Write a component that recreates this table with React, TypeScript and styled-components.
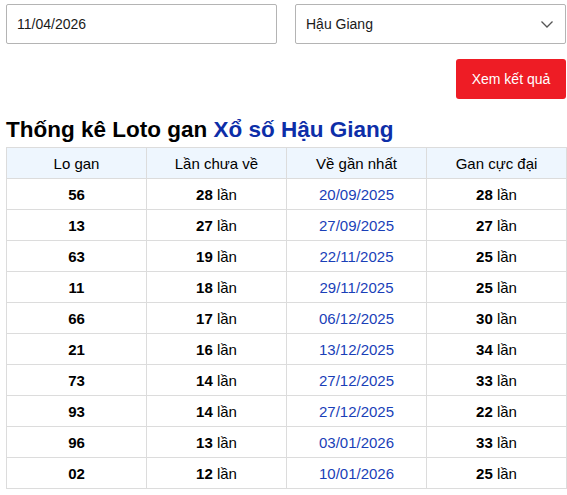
import styled, { createGlobalStyle } from "styled-components";

const GlobalStyle = createGlobalStyle`
  body {
    margin: 0;
    font-family: "Liberation Sans", Arial, sans-serif;
    background: #fff;
    color: #000;
  }
`;

const rows = [
  { num: "56", miss: 28, last: "20/09/2025", max: 28 },
  { num: "13", miss: 27, last: "27/09/2025", max: 27 },
  { num: "63", miss: 19, last: "22/11/2025", max: 25 },
  { num: "11", miss: 18, last: "29/11/2025", max: 25 },
  { num: "66", miss: 17, last: "06/12/2025", max: 30 },
  { num: "21", miss: 16, last: "13/12/2025", max: 34 },
  { num: "73", miss: 14, last: "27/12/2025", max: 33 },
  { num: "93", miss: 14, last: "27/12/2025", max: 22 },
  { num: "96", miss: 13, last: "03/01/2026", max: 33 },
  { num: "02", miss: 12, last: "10/01/2026", max: 25 },
];

export default function App() {
  return (
    <>
      <GlobalStyle />
      <Page>
        <Filters>
          <Field>11/04/2026</Field>
          <Field>
            Hậu Giang
            <svg width="14" height="14" viewBox="0 0 14 14">
              <path d="M1.5 4.5 L7 10 L12.5 4.5" fill="none" stroke="#555" strokeWidth="1.3" />
            </svg>
          </Field>
        </Filters>
        <Actions>
          <SubmitButton>Xem kết quả</SubmitButton>
        </Actions>
        <Title>
          Thống kê Loto gan <span>Xổ số Hậu Giang</span>
        </Title>
        <Table>
          <thead>
            <tr>
              <th>Lo gan</th>
              <th>Lần chưa về</th>
              <th>Về gần nhất</th>
              <th>Gan cực đại</th>
            </tr>
          </thead>
          <tbody>
            {rows.map((r) => (
              <tr key={r.num}>
                <td>
                  <b>{r.num}</b>
                </td>
                <td>
                  <b>{r.miss}</b> lần
                </td>
                <DateCell>{r.last}</DateCell>
                <td>
                  <b>{r.max}</b> lần
                </td>
              </tr>
            ))}
          </tbody>
        </Table>
      </Page>
    </>
  );
}

const Page = styled.div`
  width: 560px;
  padding: 4px 0 0 6px;
`;

const Filters = styled.div`
  display: grid;
  grid-template-columns: 1fr 1fr;
  gap: 18px;
`;

const Field = styled.div`
  height: 40px;
  box-sizing: border-box;
  border: 1px solid #b4b4b4;
  border-radius: 2px;
  display: flex;
  align-items: center;
  justify-content: space-between;
  padding: 0 10px;
  font-size: 14px;
  color: #1a1a1a;

  svg {
    margin-right: 1px;
  }
`;

const Actions = styled.div`
  display: flex;
  justify-content: flex-end;
  margin-top: 15px;
`;

const SubmitButton = styled.button`
  width: 110px;
  height: 40px;
  border: none;
  border-radius: 3px;
  background: #ee1c25;
  color: #fff;
  font-family: "Liberation Sans", Arial, sans-serif;
  font-size: 14px;
  cursor: pointer;
`;

const Title = styled.h2`
  margin: 18px 0 4px;
  font-size: 22.5px;
  font-weight: bold;
  line-height: 26px;

  span {
    color: #0d2ea8;
  }
`;

const Table = styled.table`
  width: 561px;
  border-collapse: collapse;
  font-size: 15px;
  table-layout: fixed;

  th,
  td {
    border: 1px solid #dcdcdc;
    height: 30px;
    padding: 0;
    text-align: center;
    font-weight: normal;
  }

  th {
    background: #eef6fe;
  }

  b {
    font-weight: bold;
  }
`;

const DateCell = styled.td`
  color: #1a3fb8;
`;
